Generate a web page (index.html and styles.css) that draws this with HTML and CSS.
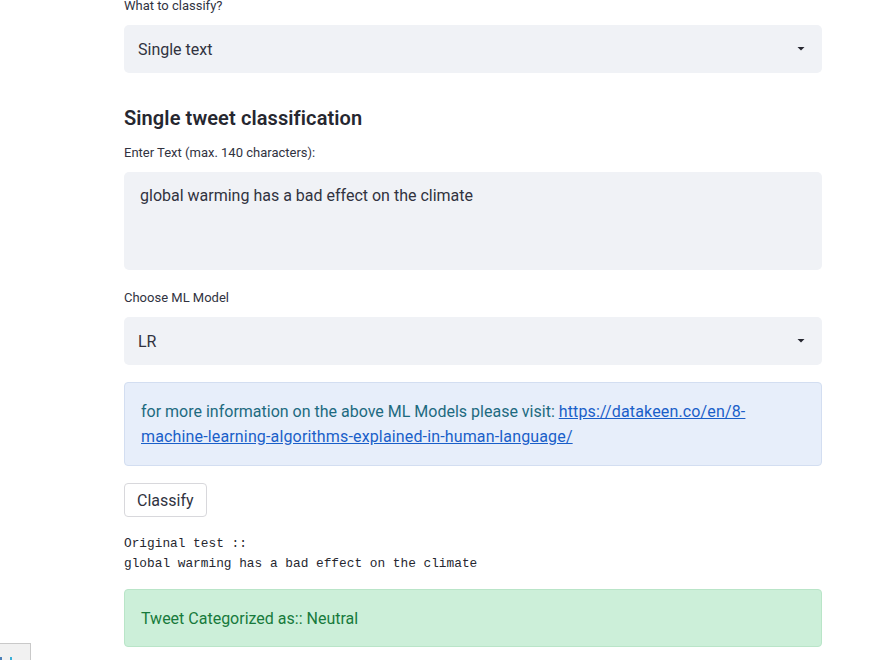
FILE: index.html
```html
<!DOCTYPE html>
<html>
<head>
<meta charset="utf-8">
<link rel="stylesheet" href="styles.css">
</head>
<body>
<main class="main">
  <div class="label lbl-first">What to classify?</div>
  <div class="select">
    <span>Single text</span>
    <svg class="caret" width="10" height="6" viewBox="0 0 10 6"><path d="M1.5 1h7L5 4.5z" fill="#262730"/></svg>
  </div>
  <h2 class="heading">Single tweet classification</h2>
  <div class="label lbl-text">Enter Text (max. 140 characters):</div>
  <div class="textarea">global warming has a bad effect on the climate</div>
  <div class="label lbl-model">Choose ML Model</div>
  <div class="select">
    <span>LR</span>
    <svg class="caret" width="10" height="6" viewBox="0 0 10 6"><path d="M1.5 1h7L5 4.5z" fill="#262730"/></svg>
  </div>
  <div class="info">for more information on the above ML Models please visit: <a href="#">https://datakeen.co/en/8-machine-learning-algorithms-explained-in-human-language/</a></div>
  <div class="btn-row"><button class="btn">Classify</button></div>
  <pre class="mono">Original test ::
global warming has a bad effect on the climate</pre>
  <div class="success">Tweet Categorized as:: Neutral</div>
</main>
<div class="corner"><span class="c1"></span><span class="c2"></span></div>
</body>
</html>
```
FILE: styles.css
```css
* { box-sizing: border-box; }
html, body { margin: 0; padding: 0; background: #fff; }
body {
  font-family: Roboto, "Noto Sans", sans-serif;
  color: #31333f;
  width: 893px;
  height: 660px;
  overflow: hidden;
}
.main {
  display: flex;
  flex-direction: column;
  width: 698px;
  margin-left: 124px;
  margin-top: -2px;
}
.label {
  font-size: 13px;
  line-height: 16px;
  color: #31333f;
}
.select {
  height: 48px;
  background: #f0f2f6;
  border-radius: 5px;
  display: flex;
  align-items: center;
  justify-content: space-between;
  padding: 0 16px 0 14px;
  font-size: 16px;
  margin-top: 11px;
}
.caret { display: block; }
.heading {
  font-size: 20px;
  font-weight: 600;
  line-height: 28px;
  margin: 31px 0 0;
  color: #262730;
  letter-spacing: 0.1px;
}
.lbl-text { margin-top: 13px; }
.textarea {
  margin-top: 11px;
  height: 98px;
  background: #f0f2f6;
  border-radius: 5px;
  padding: 14px 16px;
  font-size: 16px;
  line-height: 20px;
}
.lbl-model { margin-top: 20px; }
.info {
  margin-top: 17px;
  background: #e7eefa;
  border: 1px solid #d3def1;
  border-radius: 4px;
  padding: 16px 16px 16px;
  font-size: 16px;
  line-height: 25px;
  color: #1d6a80;
}
.info a { color: #1a5fc9; text-decoration: underline; letter-spacing: 0.15px; }
.btn-row { margin-top: 17px; display: flex; }
.btn {
  font-family: inherit;
  font-size: 16px;
  color: #31333f;
  background: #fff;
  border: 1px solid #d8d8dc;
  border-radius: 4px;
  height: 34px;
  padding: 0 12px;
}
.mono {
  margin: 17px 0 0;
  font-family: "Liberation Mono", "DejaVu Sans Mono", monospace;
  font-size: 12.8px;
  line-height: 20px;
  color: #262730;
}
.success {
  margin-top: 15px;
  height: 58px;
  background: #ccefd9;
  border: 1px solid #b9e5c8;
  border-radius: 4px;
  padding: 0 16px;
  display: flex;
  align-items: center;
  font-size: 16px;
  color: #177a3c;
}
.corner {
  position: fixed;
  left: 0;
  bottom: 0;
  width: 31px;
  height: 17px;
  background: #f1f1f1;
  border-top: 1px solid #c9c9c9;
  border-right: 1px solid #c9c9c9;
}
.c1, .c2 { position: absolute; bottom: 0; width: 2px; height: 3px; background: #4a7fb8; }
.c1 { left: 0; }
.c2 { left: 10px; background: #3ab0d8; }
```
